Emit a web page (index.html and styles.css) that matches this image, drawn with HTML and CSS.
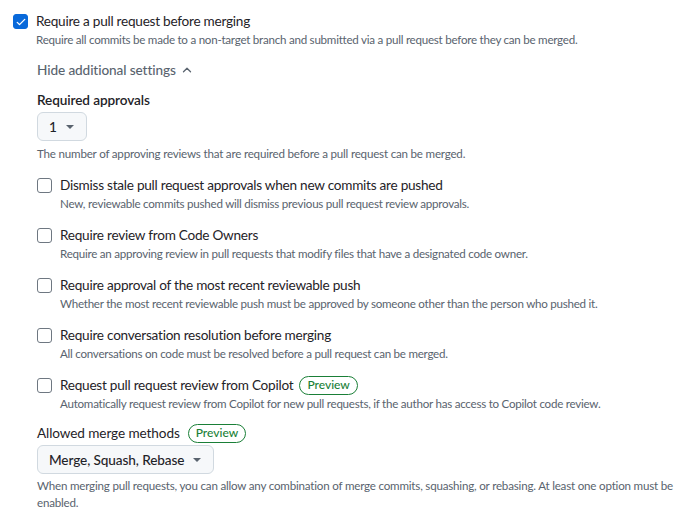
FILE: index.html
```html
<!DOCTYPE html>
<html lang="en">
<head>
<meta charset="utf-8">
<title>Branch protection</title>
<link rel="stylesheet" href="styles.css">
</head>
<body>
<div class="page">
  <div class="check-row">
    <span class="cb cb-checked">
      <svg viewBox="0 0 16 16" width="12" height="12"><path d="M3 8.5l3 3 7-7" fill="none" stroke="#fff" stroke-width="1.8" stroke-linecap="round" stroke-linejoin="round"/></svg>
    </span>
    <div class="check-text">
      <div class="title">Require a pull request before merging</div>
      <div class="desc">Require all commits be made to a non-target branch and submitted via a pull request before they can be merged.</div>
    </div>
  </div>

  <div class="sub">
    <div class="toggle">Hide additional settings
      <svg viewBox="0 0 16 16" width="14" height="14"><path d="M4 10l4-4 4 4" fill="none" stroke="#59636e" stroke-width="1.5" stroke-linecap="round" stroke-linejoin="round"/></svg>
    </div>

    <div class="label">Required approvals</div>
    <div class="select select-num">1 <span class="caret"></span></div>
    <div class="note note-first">The number of approving reviews that are required before a pull request can be merged.</div>

    <div class="opt opt-first">
      <span class="cb"></span>
      <div class="check-text">
        <div class="title">Dismiss stale pull request approvals when new commits are pushed</div>
        <div class="desc">New, reviewable commits pushed will dismiss previous pull request review approvals.</div>
      </div>
    </div>
    <div class="opt">
      <span class="cb"></span>
      <div class="check-text">
        <div class="title">Require review from Code Owners</div>
        <div class="desc">Require an approving review in pull requests that modify files that have a designated code owner.</div>
      </div>
    </div>
    <div class="opt">
      <span class="cb"></span>
      <div class="check-text">
        <div class="title">Require approval of the most recent reviewable push</div>
        <div class="desc">Whether the most recent reviewable push must be approved by someone other than the person who pushed it.</div>
      </div>
    </div>
    <div class="opt">
      <span class="cb"></span>
      <div class="check-text">
        <div class="title">Require conversation resolution before merging</div>
        <div class="desc">All conversations on code must be resolved before a pull request can be merged.</div>
      </div>
    </div>
    <div class="opt">
      <span class="cb"></span>
      <div class="check-text">
        <div class="title">Request pull request review from Copilot <span class="badge">Preview</span></div>
        <div class="desc">Automatically request review from Copilot for new pull requests, if the author has access to Copilot code review.</div>
      </div>
    </div>

    <div class="label label-merge">Allowed merge methods <span class="badge">Preview</span></div>
    <div class="select select-merge">Merge, Squash, Rebase <span class="caret"></span></div>
    <div class="note">When merging pull requests, you can allow any combination of merge commits, squashing, or rebasing. At least one option must be enabled.</div>
  </div>
</div>
</body>
</html>
```

FILE: styles.css
```css
* { box-sizing: border-box; }
body {
  margin: 0;
  background: #fff;
  font-family: "Segoe UI", Lato, "Noto Sans", sans-serif;
  color: #1f2328;
}
.page {
  padding: 11px 8px 0 13px;
}
.check-row {
  display: flex;
  gap: 8px;
  align-items: flex-start;
}
.cb {
  flex: none;
  width: 15px;
  height: 15px;
  margin-top: 3px;
  border: 1px solid #6e7781;
  border-radius: 3px;
  background: #fff;
  display: flex;
  align-items: center;
  justify-content: center;
}
.cb-checked {
  background: #0969da;
  border-color: #0969da;
}
.title {
  font-size: 13.6px;
  letter-spacing: -0.25px;
  line-height: 20px;
  display: flex;
  align-items: center;
  gap: 6px;
}
.desc {
  font-size: 11.6px;
  letter-spacing: -0.25px;
  line-height: 18px;
  color: #59636e;
}
.sub {
  padding-left: 24px;
  padding-top: 11px;
}
.toggle {
  font-size: 13.6px;
  letter-spacing: -0.1px;
  line-height: 20px;
  color: #59636e;
  font-weight: 500;
  display: flex;
  align-items: center;
  gap: 4px;
}
.label {
  margin-top: 10px;
  font-size: 13.6px;
  letter-spacing: -0.1px;
  line-height: 20px;
  font-weight: 600;
  display: flex;
  align-items: center;
  gap: 8px;
}
.select {
  margin-top: 2px;
  display: inline-flex;
  align-items: center;
  height: 29px;
  border: 1px solid #d1d9e0;
  border-radius: 6px;
  background: #f6f8fa;
  font-size: 13.6px;
  letter-spacing: -0.1px;
  font-weight: 500;
  padding: 0 12px 0 11px;
  gap: 9px;
}
.caret {
  width: 0;
  height: 0;
  border-left: 4px solid transparent;
  border-right: 4px solid transparent;
  border-top: 4px solid #59636e;
}
.note {
  margin-top: 3px;
  font-size: 11.6px;
  letter-spacing: -0.2px;
  line-height: 17px;
  color: #59636e;
}
.note-first { margin-top: 4px; }
.opt {
  display: flex;
  gap: 8px;
  align-items: flex-start;
  margin-top: 12px;
}
.opt-first { margin-top: 13px; }
.badge {
  display: inline-flex;
  align-items: center;
  height: 19px;
  padding: 0 7px;
  border: 1px solid #1a7f37;
  border-radius: 999px;
  color: #1a7f37;
  font-size: 12px;
  letter-spacing: 0;
  font-weight: 500;
}
.label-merge { margin-top: 10px; font-weight: 400; }
.select-merge { margin-top: 2px; }
```
